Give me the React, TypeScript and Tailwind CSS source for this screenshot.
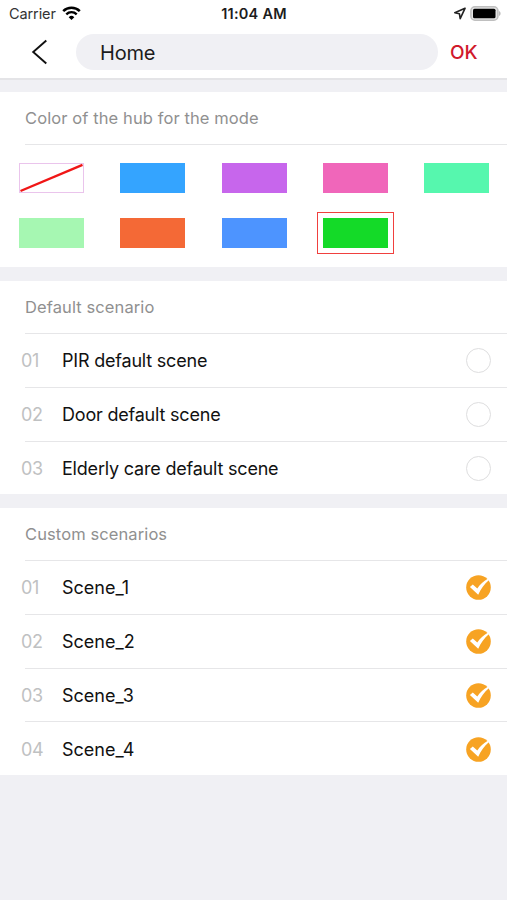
import { useState } from 'react';
import clsx from 'clsx';

type Scenario = { id: string; name: string };

const HUB_COLORS = [
    'none',
    'bg-[#34a4ff]',
    'bg-[#c766ec]',
    'bg-[#f066ba]',
    'bg-[#56f7ae]',
    'bg-[#a6f7b2]',
    'bg-[#f46936]',
    'bg-[#4d94ff]',
    'bg-[#14da28]',
];

const DEFAULT_SCENARIOS: Scenario[] = [
    { id: '01', name: 'PIR default scene' },
    { id: '02', name: 'Door default scene' },
    { id: '03', name: 'Elderly care default scene' },
];

const CUSTOM_SCENARIOS: Scenario[] = [
    { id: '01', name: 'Scene_1' },
    { id: '02', name: 'Scene_2' },
    { id: '03', name: 'Scene_3' },
    { id: '04', name: 'Scene_4' },
];

function StatusBar() {
    return (
        <div className="grid grid-cols-3 items-center h-[27px] pl-[9px] pr-[6px] text-[14.5px] leading-none">
            <div className="flex items-center gap-[6px] text-[#333]">
                <span className="pt-px tracking-[-0.1px]">Carrier</span>
                <svg width="19" height="15" viewBox="0 0 19 15" fill="none" stroke="#000">
                    <path d="M1.2 5.1a11.8 11.8 0 0 1 16.6 0" strokeWidth="2.5" />
                    <path d="M4.3 8.3a7.4 7.4 0 0 1 10.4 0" strokeWidth="2.4" />
                    <path d="M9.5 14l-2.8-2.8a4 4 0 0 1 5.6 0z" fill="#000" stroke="none" />
                </svg>
            </div>
            <span className="-ml-[2px] pt-px text-center font-semibold tracking-[0.25px] text-[#1c1c1c] whitespace-nowrap">11:04 AM</span>
            <div className="flex items-center justify-end gap-[4px]">
                <svg width="13" height="13" viewBox="0 0 13 13" fill="none" stroke="#222" strokeWidth="1.6" strokeLinejoin="round">
                    <path d="M12 1.3L1.8 5.8l4.6.9.8 5z" />
                </svg>
                <svg width="31" height="15" viewBox="0 0 31 15">
                    <rect x="0.9" y="0.8" width="27" height="13.4" rx="4" fill="#e4e4e4" stroke="#bfbfbf" strokeWidth="1.6" />
                    <rect x="3" y="2.8" width="22.5" height="9.4" rx="1.5" fill="#000" />
                    <path d="M29 5v5c1-.4 1.6-1.4 1.6-2.5S30 5.4 29 5z" fill="#bbb" />
                </svg>
            </div>
        </div>
    );
}

function SectionTitle({ children }: { children: string }) {
    return (
        <h2 className="flex items-center h-[53px] ml-[25px] border-b border-[#e6e6e8] text-[16.5px] text-[#909090] tracking-[0.1px]">
            {children}
        </h2>
    );
}

function CheckMark({ checked }: { checked: boolean }) {
    if (!checked) {
        return <span className="w-[25px] h-[25px] rounded-full border border-[#dededf]" />;
    }
    return (
        <svg width="25" height="25" viewBox="0 0 25 25">
            <circle cx="12.5" cy="12.5" r="12.3" fill="#f7a323" />
            <path d="M3.900 12.100l2.900-2.500 4.500 3.800c2.800-3.900 6.200-7 10.500-9.600l1 1.500c-4.500 3.800-7.900 8.600-10.600 14.400z" fill="#fff" />
        </svg>
    );
}

type ScenarioListProps = {
    items: Scenario[];
    selected: string[];
    onToggle: (id: string) => void;
    nameClass?: string;
};

function ScenarioList({ items, selected, onToggle, nameClass }: ScenarioListProps) {
    return (
        <ul>
            {items.map((item, i) => (
                <li key={item.id} className="h-[53.75px]" onClick={() => onToggle(item.id)}>
                    <div className="flex items-center h-[52.75px] pt-px pl-[21px] pr-4">
                        <span className="w-[41px] text-[18px] tracking-[-0.3px] text-[#bfc1c2]">{item.id}</span>
                        <span className={clsx('flex-1 text-[18px] text-[#111]', nameClass)}>{item.name}</span>
                        <CheckMark checked={selected.includes(item.id)} />
                    </div>
                    {i < items.length - 1 && <div className="ml-[25px] h-px bg-[#e6e6e8]" />}
                </li>
            ))}
        </ul>
    );
}

const toggle = (list: string[], id: string) => (list.includes(id) ? list.filter(x => x !== id) : [...list, id]);

export default function App() {
    const [name, setName] = useState('Home');
    const [color, setColor] = useState(8);
    const [defaults, setDefaults] = useState<string[]>([]);
    const [customs, setCustoms] = useState<string[]>(CUSTOM_SCENARIOS.map(s => s.id));

    return (
        <div className="w-full h-[900px] overflow-hidden bg-[#f0f0f4] font-['Inter',sans-serif]">
            {/* Header */}
            <header className="h-[80px] bg-white border-b-2 border-[#e4e4e7]">
                <StatusBar />
                <div className="flex items-center pt-[7px]">
                    <button className="w-[76px] pl-[31px]">
                        <svg width="18" height="26" viewBox="0 0 18 26" fill="none" stroke="#111" strokeWidth="1.9">
                            <path d="M15.300 1.500L2.200 13l13.100 11.500" />
                        </svg>
                    </button>
                    <input
                        value={name}
                        onChange={e => setName(e.target.value)}
                        className="w-[362px] h-[36px] rounded-full bg-[#f0f0f4] pt-[2px] pl-6 text-[20px] tracking-[-0.2px] text-[#1c1c1c] outline-none"
                    />
                    <button className="ml-[12px] pt-[2px] text-[19px] font-medium text-[#d0192b]">OK</button>
                </div>
            </header>

            {/* Hub color */}
            <section className="mt-[12px] h-[175px] bg-white">
                <SectionTitle>Color of the hub for the mode</SectionTitle>
                <div className="grid grid-cols-[repeat(5,65px)] gap-x-[36.25px] gap-y-[25px] pl-[19px] pt-[18px]">
                    {HUB_COLORS.map((c, i) => (
                        <button key={c} onClick={() => setColor(i)} className={clsx('relative h-[30px]', c)}>
                            {c === 'none' && (
                                <svg className="block" width="65" height="30" viewBox="0 0 65 30" fill="none">
                                    <rect x="0.5" y="0.5" width="64" height="29" stroke="#eac4ec" />
                                    <path d="M1.500 28L63.500 1.800" stroke="#f01616" strokeWidth="2.400" />
                                </svg>
                            )}
                            {i === color && <span className="absolute -inset-[6px] border border-[#f0403e]" />}
                        </button>
                    ))}
                </div>
            </section>

            {/* Default scenarios */}
            <section className="mt-[14px] h-[213px] bg-white">
                <SectionTitle>Default scenario</SectionTitle>
                <ScenarioList
                    items={DEFAULT_SCENARIOS}
                    selected={defaults}
                    onToggle={id => setDefaults(toggle(defaults, id))}
                    nameClass="tracking-[-0.2px]"
                />
            </section>

            {/* Custom scenarios */}
            <section className="mt-[14px] h-[267px] bg-white">
                <SectionTitle>Custom scenarios</SectionTitle>
                <ScenarioList items={CUSTOM_SCENARIOS} selected={customs} onToggle={id => setCustoms(toggle(customs, id))} />
            </section>
        </div>
    );
}
